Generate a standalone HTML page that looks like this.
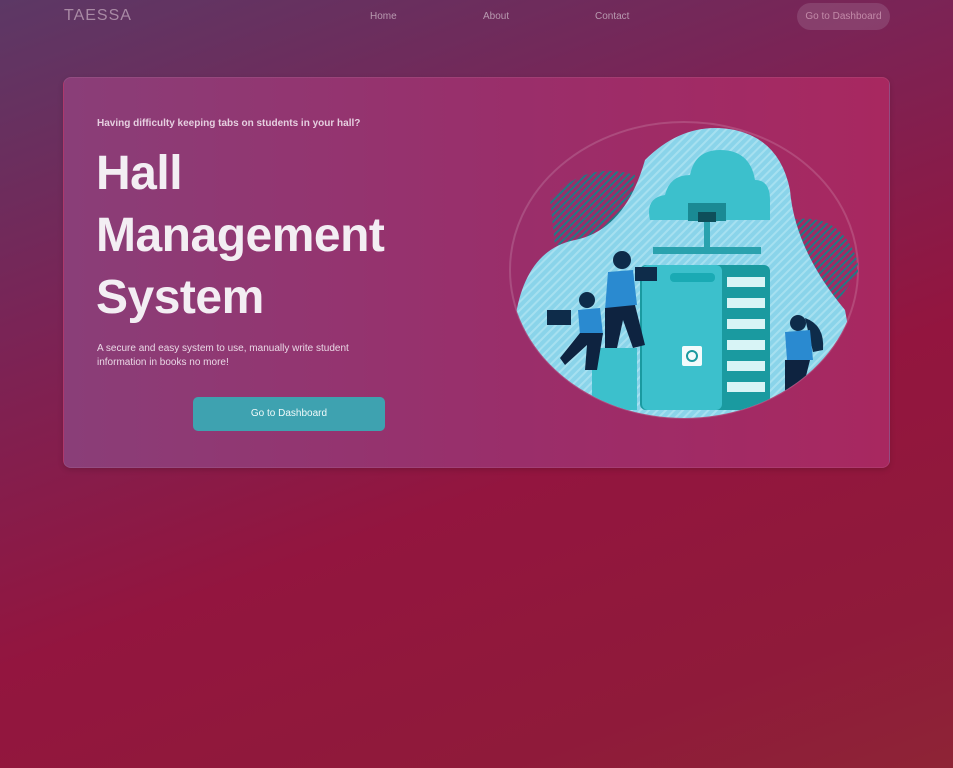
<!DOCTYPE html>
<html><head><style>
*{margin:0;padding:0;box-sizing:border-box}
body{width:953px;height:768px;overflow:hidden;font-family:"Liberation Sans",sans-serif;
background:linear-gradient(160deg,#5c3865 0%,#7a2456 30%,#93153f 60%,#8f1a3a 85%,#8e2436 100%);position:relative}
.logo{position:absolute;left:64px;top:7px;color:#a98aa5;font-size:16px;letter-spacing:1px}
.nav{position:absolute;top:11px;color:#b89ab0;font-size:10px}
.btn1{position:absolute;left:797px;top:3px;width:93px;height:27px;border-radius:14px;background:rgba(150,90,130,.5);color:#c28aa8;font-size:10px;line-height:27px;text-align:center}
.card{position:absolute;left:63px;top:77px;width:827px;height:391px;border-radius:8px;
background:linear-gradient(90deg,#8a3e78 0%,#9a2e6a 55%,#a82860 100%);box-shadow:0 2px 6px rgba(0,0,0,.15);border:1px solid rgba(255,255,255,.08)}
.sub{position:absolute;left:97px;top:118px;color:#e6cfe0;font-size:10px;font-weight:bold}
h1{position:absolute;left:96px;top:143px;color:#f3eef3;font-size:48px;line-height:62px;font-weight:bold;letter-spacing:-0.5px}
.p{position:absolute;left:97px;top:342px;color:#ead8e6;font-size:10px;line-height:14px;width:290px}
.btn2{position:absolute;left:193px;top:397px;width:192px;height:34px;border-radius:5px;background:#3ea2b0;color:#f0fafa;font-size:10px;line-height:34px;text-align:center}
</style></head><body>
<div class="logo">TAESSA</div>
<div class="nav" style="left:370px">Home</div>
<div class="nav" style="left:483px">About</div>
<div class="nav" style="left:595px">Contact</div>
<div class="btn1">Go to Dashboard</div>
<div class="card"></div>
<div class="sub">Having difficulty keeping tabs on students in your hall?</div>
<h1>Hall<br>Management<br>System</h1>
<div class="p">A secure and easy system to use, manually write student information in books no more!</div>
<div class="btn2">Go to Dashboard</div>
<svg style="position:absolute;left:505px;top:120px" width="360" height="305" viewBox="0 0 360 305">
<defs>
<clipPath id="c"><ellipse cx="179" cy="150" rx="174" ry="148"/></clipPath>
<pattern id="h" width="6" height="6" patternUnits="userSpaceOnUse" patternTransform="rotate(45)"><rect width="6" height="6" fill="#8ad4ea"/><rect width="2" height="6" fill="#a6e0f0"/></pattern>
<pattern id="d" width="5" height="5" patternUnits="userSpaceOnUse" patternTransform="rotate(45)"><rect width="2" height="5" fill="#1f7a86"/></pattern>
</defs>
<ellipse cx="179" cy="150" rx="174" ry="148" fill="none" stroke="rgba(255,255,255,.15)" stroke-width="2"/>
<g clip-path="url(#c)">
<path d="M45 80 Q80 40 130 55 L120 120 L50 125Z" fill="url(#d)"/>
<path d="M285 100 Q340 90 355 150 L330 185 L285 170Z" fill="url(#d)"/>
<path d="M140 40 Q180 0 230 10 Q275 20 285 70 Q290 130 340 190 L360 300 L0 300 L10 200 Q20 130 70 120 Q120 110 140 40Z" fill="url(#h)"/>
<path d="M145 100 Q140 78 160 75 Q165 55 185 55 Q190 30 215 30 Q245 30 250 60 Q265 60 265 80 L265 100Z" fill="#3cc0cc"/>
<rect x="183" y="83" width="38" height="18" fill="#1a8a94"/><rect x="193" y="92" width="18" height="10" fill="#0e4f5a"/>
<rect x="199" y="102" width="6" height="28" fill="#2aa2ae"/>
<rect x="148" y="127" width="108" height="7" fill="#2aa2ae"/>
<rect x="135" y="145" width="130" height="145" rx="6" fill="#1a9aa0"/>
<rect x="137" y="145" width="80" height="145" rx="6" fill="#3cc0cc"/>
<g fill="#d8f4f6"><rect x="222" y="157" width="38" height="10"/><rect x="222" y="178" width="38" height="10"/><rect x="222" y="199" width="38" height="10"/><rect x="222" y="220" width="38" height="10"/><rect x="222" y="241" width="38" height="10"/><rect x="222" y="262" width="38" height="10"/></g>
<rect x="165" y="153" width="45" height="9" rx="4" fill="#1aaab4"/>
<rect x="177" y="226" width="20" height="20" rx="2" fill="#f2fbfc"/>
<circle cx="187" cy="236" r="5" fill="none" stroke="#1a9aa0" stroke-width="2"/>
<rect x="87" y="228" width="45" height="62" fill="#3cc0cc"/>
<circle cx="117" cy="140" r="9" fill="#0e2c4a"/>
<path d="M103 152 L128 150 L132 185 L100 190Z" fill="#2a8ad0"/>
<path d="M100 188 L130 185 L140 225 L128 228 L118 200 L112 228 L100 228Z" fill="#0e2340"/>
<rect x="130" y="147" width="22" height="14" fill="#0e2c4a"/>
<circle cx="82" cy="180" r="8" fill="#0e2c4a"/>
<path d="M73 190 L95 188 L98 215 L75 215Z" fill="#2a8ad0"/>
<path d="M75 213 L98 213 L92 250 L80 250 L82 225 L60 245 L55 238Z" fill="#0e2340"/>
<rect x="42" y="190" width="24" height="15" fill="#0e2c4a"/>
<circle cx="293" cy="203" r="8" fill="#0e2c4a"/>
<path d="M300 198 Q320 205 318 230 L308 232Z" fill="#0e2c4a"/>
<path d="M280 212 L305 210 L308 240 L282 240Z" fill="#2a8ad0"/>
<path d="M280 240 L305 240 L295 280 L280 280Z" fill="#0e2340"/>
</g>
</svg>
</body></html>
